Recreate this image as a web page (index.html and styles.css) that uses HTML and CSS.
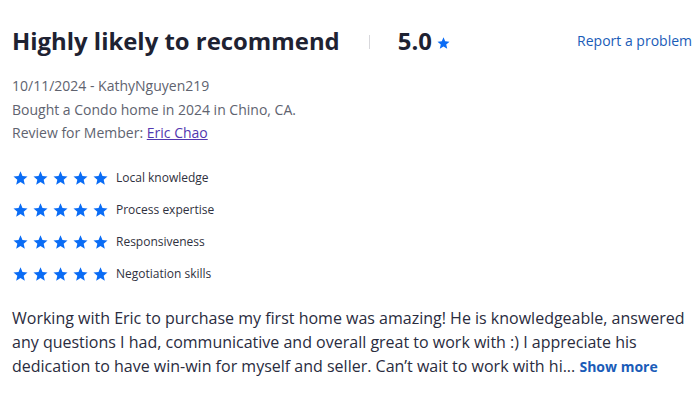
FILE: index.html
```html
<!DOCTYPE html>
<html>
<head>
<meta charset="utf-8">
<link rel="stylesheet" href="styles.css">
</head>
<body>
<svg width="0" height="0" class="defs">
  <defs>
    <symbol id="star" viewBox="1.5 1.5 21 20">
      <path d="M12 17.27L18.18 21l-1.64-7.03L22 9.24l-7.19-.61L12 2 9.19 8.63 2 9.24l5.46 4.73L5.82 21z"/>
    </symbol>
  </defs>
</svg>
<div class="review">
  <div class="header">
    <h2 class="title">Highly likely to recommend</h2>
    <span class="sep"></span>
    <span class="score">5.0</span>
    <svg class="score-star"><use href="#star"/></svg>
    <a class="report" href="#">Report a problem</a>
  </div>
  <div class="meta">
    <div>10/11/2024 - KathyNguyen219</div>
    <div>Bought a Condo home in 2024 in Chino, CA.</div>
    <div>Review for Member: <a class="member" href="#">Eric Chao</a></div>
  </div>
  <ul class="ratings">
    <li><span class="stars"><svg><use href="#star"/></svg><svg><use href="#star"/></svg><svg><use href="#star"/></svg><svg><use href="#star"/></svg><svg><use href="#star"/></svg></span><span class="label">Local knowledge</span></li>
    <li><span class="stars"><svg><use href="#star"/></svg><svg><use href="#star"/></svg><svg><use href="#star"/></svg><svg><use href="#star"/></svg><svg><use href="#star"/></svg></span><span class="label">Process expertise</span></li>
    <li><span class="stars"><svg><use href="#star"/></svg><svg><use href="#star"/></svg><svg><use href="#star"/></svg><svg><use href="#star"/></svg><svg><use href="#star"/></svg></span><span class="label">Responsiveness</span></li>
    <li><span class="stars"><svg><use href="#star"/></svg><svg><use href="#star"/></svg><svg><use href="#star"/></svg><svg><use href="#star"/></svg><svg><use href="#star"/></svg></span><span class="label">Negotiation skills</span></li>
  </ul>
  <p class="body">Working with Eric to purchase my first home was amazing! He is knowledgeable, answered any questions I had, communicative and overall great to work with :) I appreciate his dedication to have win-win for myself and seller. Can’t wait to work with hi... <a class="more" href="#">Show more</a></p>
</div>
</body>
</html>
```
FILE: styles.css
```css
html, body {
  margin: 0;
  padding: 0;
  background: #ffffff;
}
body {
  font-family: "Open Sans", "Liberation Sans", sans-serif;
  color: #2a2c3a;
}
.defs {
  position: absolute;
}
.review {
  padding: 24px 8px 0 12px;
}
.header {
  display: flex;
  align-items: center;
  height: 32px;
}
.title {
  margin: 0;
  font-size: 23.9px;
  font-weight: 700;
  color: #1e2232;
}
.sep {
  width: 1px;
  height: 14px;
  background: #d8d8dc;
  margin: 4px 28px 0 29px;
}
.score {
  font-size: 23.9px;
  font-weight: 700;
  color: #1e2232;
}
.score-star {
  width: 13px;
  height: 12px;
  fill: #0a6cf5;
  margin: 6px 0 0 5px;
}
.report {
  margin-left: auto;
  font-size: 14px;
  color: #1a5cb8;
  text-decoration: none;
}
.meta {
  margin-top: 18px;
  font-size: 14px;
  line-height: 23.5px;
  color: #60636f;
}
.member {
  color: #5237b0;
  text-decoration: underline;
}
.ratings {
  list-style: none;
  margin: 17px 0 0 0;
  padding: 0;
}
.ratings li {
  display: flex;
  align-items: center;
  height: 32px;
}
.stars {
  display: flex;
  gap: 5px;
  margin-left: 1px;
}
.stars svg {
  width: 15px;
  height: 14px;
  fill: #0a6cf5;
}
.label {
  margin-left: 8px;
  font-size: 12px;
  color: #2f3140;
}
.body {
  margin: 16px 0 0 0;
  font-size: 16px;
  line-height: 24px;
  color: #2a2c3e;
}
.more {
  font-size: 14px;
  font-weight: 700;
  color: #1a5cb8;
  text-decoration: none;
}
```
